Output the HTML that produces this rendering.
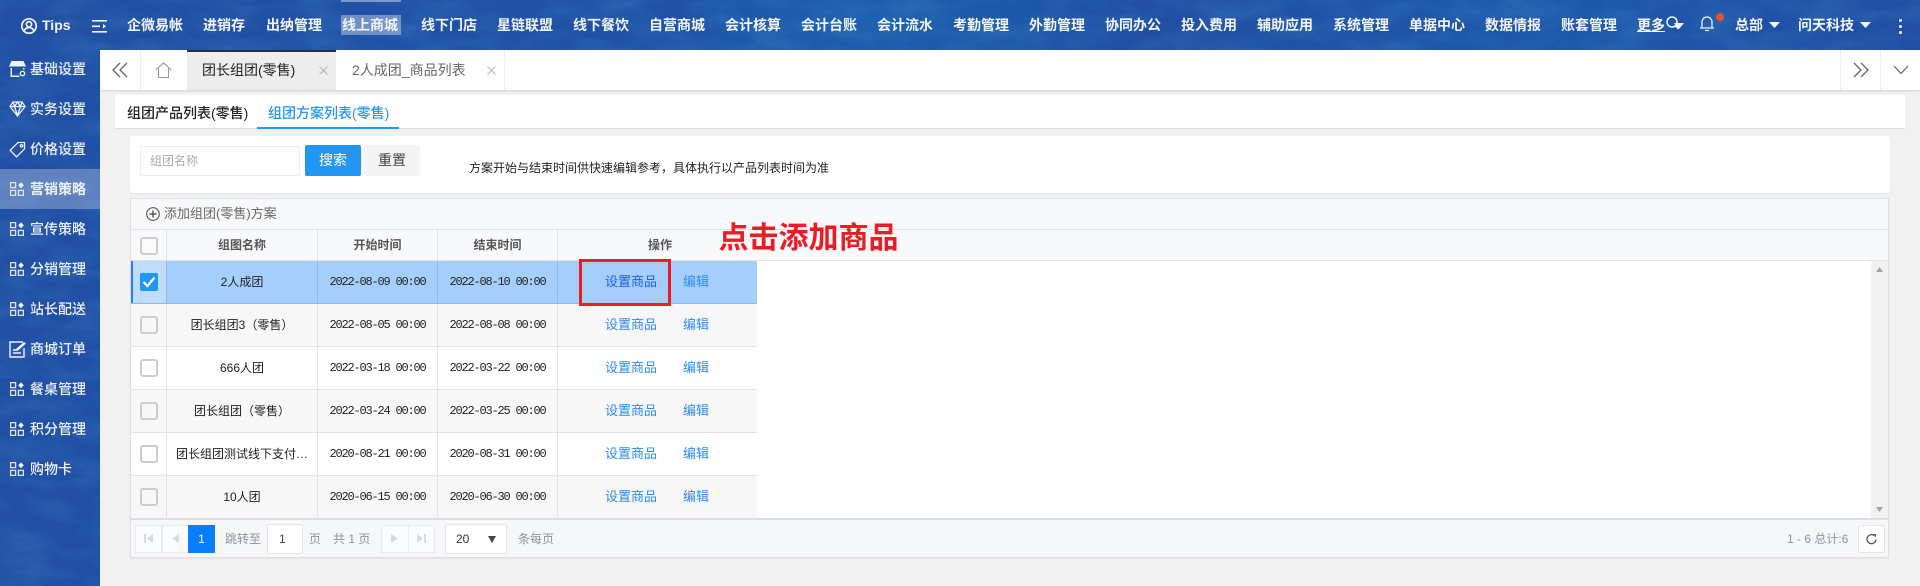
<!DOCTYPE html>
<html lang="zh">
<head>
<meta charset="utf-8">
<title>团长组团(零售)</title>
<style>
html,body{margin:0;padding:0;width:1920px;height:586px;overflow:hidden;background:#f1f1f1;}
body{position:relative;font-family:"Liberation Sans","Noto Sans CJK SC",sans-serif;font-size:12px;color:#222;}
.a{position:absolute;white-space:nowrap;}
.nav{position:absolute;top:15px;height:20px;line-height:20px;font-size:14px;font-weight:700;color:#f2f5fb;white-space:nowrap;}
.side{position:absolute;left:30px;height:20px;line-height:20px;font-size:14px;font-weight:500;color:#eef2fa;white-space:nowrap;}
.sic{position:absolute;left:10px;width:14px;height:14px;}
.hcell{position:absolute;top:0;height:30px;line-height:30px;text-align:center;font-weight:700;font-size:12px;color:#555;border-right:1px solid #e0e3e8;box-sizing:border-box;}
.row{position:absolute;left:131px;width:626px;height:43px;box-sizing:border-box;border-bottom:1px solid #e3e3e3;background:#fff;}
.row.e{background:#f7f7f7;}
.row.s{background:#a4cffc;border-bottom-color:#8fbbe8;}
.c{position:absolute;top:0;height:42px;line-height:42px;text-align:center;box-sizing:border-box;border-right:1px solid #e3e3e3;white-space:nowrap;overflow:hidden;font-size:12px;color:#222;}
.s .c{border-right-color:#8fbbe8;}
.c0{left:0;width:36px;}
.c1{left:36px;width:151px;}
.c2{left:187px;width:120px;font-family:"Liberation Mono",monospace;letter-spacing:-1.2px;color:#222;}
.c3{left:307px;width:120px;font-family:"Liberation Mono",monospace;letter-spacing:-1.2px;color:#222;}
.cb{position:absolute;left:9px;top:12px;width:18px;height:18px;box-sizing:border-box;border:2px solid #ccc;border-radius:3px;background:#fff;}
.e .cb{background:#f7f7f7;}
.lk{position:absolute;top:0;height:42px;line-height:42px;font-size:13px;color:#2e8bf5;white-space:nowrap;}
.pg{position:absolute;top:525px;height:28px;box-sizing:border-box;background:#fbfcfd;border:1px solid #e9ebee;}
.ptxt{position:absolute;top:529px;height:20px;line-height:20px;font-size:12px;color:#8d929c;white-space:nowrap;}
</style>
</head>
<body>

<!-- textured blue background -->
<svg class="a" style="left:0;top:0" width="1920" height="586" xmlns="http://www.w3.org/2000/svg">
  <defs>
    <linearGradient id="g" x1="0" y1="0" x2="1" y2="0">
      <stop offset="0" stop-color="#204fa3"/>
      <stop offset=".35" stop-color="#1f52a6"/>
      <stop offset=".45" stop-color="#1c5fad"/>
      <stop offset=".6" stop-color="#204fa3"/>
      <stop offset=".8" stop-color="#1e58aa"/>
      <stop offset="1" stop-color="#204fa3"/>
    </linearGradient>
    <filter id="n" x="0" y="0" width="100%" height="100%">
      <feTurbulence type="fractalNoise" baseFrequency=".02 .05" numOctaves="5" seed="11"/>
      <feColorMatrix type="matrix" values="0 0 0 0 .1  0 0 0 0 .38  0 0 0 0 .7  0 0 0 1.4 -.5"/>
    </filter>
  </defs>
  <rect width="1920" height="586" fill="url(#g)"/>
  <rect width="1920" height="586" filter="url(#n)" opacity=".28"/>
</svg>

<!-- main background -->
<div class="a" style="left:100px;top:50px;width:1820px;height:536px;background:#f1f1f1"></div>

<!-- header -->
<svg class="a" style="left:20px;top:17px" width="18" height="18" viewBox="0 0 18 18" fill="none" stroke="#f2f5fb" stroke-width="1.7">
  <circle cx="9" cy="9" r="7.2"/><circle cx="9" cy="7.2" r="2.6"/><path d="M4 14c1-2.6 3-3.4 5-3.4s4 .8 5 3.4"/>
</svg>
<div class="a" style="left:42px;top:15px;height:20px;line-height:20px;font-size:14px;font-weight:700;color:#f2f5fb">Tips</div>
<svg class="a" style="left:92px;top:20px" width="15" height="13" viewBox="0 0 15 13" fill="#f2f5fb">
  <rect x="0" y="0" width="15" height="1.6"/><rect x="0" y="5.5" width="8" height="1.6"/><rect x="0" y="11" width="15" height="1.6"/><path d="M11 4l3 2.3-3 2.3z"/>
</svg>
<div class="a" style="left:341px;top:0;width:60px;height:2px;background:rgba(255,255,255,.4)"></div>
<div class="a" style="left:341px;top:15px;width:60px;height:20px;background:rgba(255,255,255,.36)"></div>

<div class="nav" style="left:127px">企微易帐</div>
<div class="nav" style="left:203px">进销存</div>
<div class="nav" style="left:266px">出纳管理</div>
<div class="nav" style="left:342px">线上商城</div>
<div class="nav" style="left:421px">线下门店</div>
<div class="nav" style="left:497px">星链联盟</div>
<div class="nav" style="left:573px">线下餐饮</div>
<div class="nav" style="left:649px">自营商城</div>
<div class="nav" style="left:725px">会计核算</div>
<div class="nav" style="left:801px">会计台账</div>
<div class="nav" style="left:877px">会计流水</div>
<div class="nav" style="left:953px">考勤管理</div>
<div class="nav" style="left:1029px">外勤管理</div>
<div class="nav" style="left:1105px">协同办公</div>
<div class="nav" style="left:1181px">投入费用</div>
<div class="nav" style="left:1257px">辅助应用</div>
<div class="nav" style="left:1333px">系统管理</div>
<div class="nav" style="left:1409px">单据中心</div>
<div class="nav" style="left:1485px">数据情报</div>
<div class="nav" style="left:1561px">账套管理</div>
<div class="nav" style="left:1637px;text-decoration:underline">更多</div>

<svg class="a" style="left:1664px;top:15px" width="22" height="18" viewBox="0 0 22 18" fill="none" stroke="#f2f5fb" stroke-width="1.5">
  <circle cx="8" cy="7" r="5"/><path d="M11.500 11l3 3"/><path d="M10 8h10l-5 6z" fill="#f2f5fb" stroke="none"/>
</svg>
<svg class="a" style="left:1699px;top:15px" width="16" height="17" viewBox="0 0 16 17" fill="none" stroke="#f2f5fb" stroke-width="1.2">
  <path d="M3 12.500V7a5 5 0 0 1 10 0v5.500"/><path d="M1 13h14"/><path d="M6 15.500h4"/>
</svg>
<div class="a" style="left:1716px;top:13px;width:8px;height:8px;border-radius:50%;background:#f2501e"></div>
<div class="nav" style="left:1735px">总部</div>
<svg class="a" style="left:1769px;top:22px" width="11" height="6" viewBox="0 0 11 6"><path d="M0 0h11L5.500 6z" fill="#f2f5fb"/></svg>
<div class="nav" style="left:1798px">问天科技</div>
<svg class="a" style="left:1860px;top:22px" width="11" height="6" viewBox="0 0 11 6"><path d="M0 0h11L5.500 6z" fill="#f2f5fb"/></svg>
<div class="a" style="left:1899px;top:19px;width:3px;height:3px;background:#f2f5fb;border-radius:50%"></div>
<div class="a" style="left:1899px;top:25px;width:3px;height:3px;background:#f2f5fb;border-radius:50%"></div>
<div class="a" style="left:1899px;top:31px;width:3px;height:3px;background:#f2f5fb;border-radius:50%"></div>

<!-- sidebar -->
<div class="a" style="left:0;top:169px;width:100px;height:40px;background:rgba(255,255,255,.28)"></div>

<svg class="a" style="left:9px;top:61px" width="18" height="17" viewBox="0 0 18 17" fill="#eef2fa">
  <path d="M2.500 0h12L17 5.500H0z"/><path d="M1.500 7v9h9v-1.500H3V7zM14 7v1.500h1.500V7z"/><circle cx="13.500" cy="12.500" r="2.200" fill="none" stroke="#eef2fa" stroke-width="1.4"/>
</svg>
<div class="side" style="top:59px">基础设置</div>
<svg class="a" style="left:9px;top:101px" width="17" height="16" viewBox="0 0 17 16" fill="none" stroke="#eef2fa" stroke-width="1.3">
  <path d="M4 1h9l3 4.500L8.500 15 1 5.500z"/><path d="M1 5.500h15M5.500 5.500l3 9 3-9M4 1l1.500 4.500L8.500 1l3 4.500L13 1"/>
</svg>
<div class="side" style="top:99px">实务设置</div>
<svg class="a" style="left:9px;top:141px" width="17" height="17" viewBox="0 0 17 17" fill="none" stroke="#eef2fa" stroke-width="1.3">
  <path d="M9 1.500h6.500V8L7.500 15.800 1.200 9.300z"/><circle cx="12.500" cy="4.800" r="1.200"/>
</svg>
<div class="side" style="top:139px">价格设置</div>

<svg width="0" height="0" style="position:absolute">
  <symbol id="gr" viewBox="0 0 14 14">
    <g fill="none" stroke="#dfe6f5" stroke-width="1.300">
      <rect x=".6" y=".6" width="5" height="5"/><rect x=".6" y="8.400" width="5" height="5"/><rect x="8.400" y="8.400" width="5" height="5"/>
    </g>
    <path d="M11 .2l2.800 3-2.800 3-2.800-3z" fill="#eef2fa"/>
  </symbol>
</svg>

<svg class="sic" style="top:182px"><use href="#gr"/></svg>
<div class="side" style="top:179px;font-weight:700">营销策略</div>
<svg class="sic" style="top:222px"><use href="#gr"/></svg>
<div class="side" style="top:219px">宣传策略</div>
<svg class="sic" style="top:262px"><use href="#gr"/></svg>
<div class="side" style="top:259px">分销管理</div>
<svg class="sic" style="top:302px"><use href="#gr"/></svg>
<div class="side" style="top:299px">站长配送</div>
<svg class="a" style="left:9px;top:341px" width="18" height="17" viewBox="0 0 18 17" fill="none" stroke="#eef2fa" stroke-width="1.400">
  <path d="M14 1H1v15h14V7"/><path d="M4 12h8M4 9h5"/><path d="M7 8l8-7 2 1.500-8 7z" fill="#eef2fa" stroke="none"/>
</svg>
<div class="side" style="top:339px">商城订单</div>
<svg class="sic" style="top:382px"><use href="#gr"/></svg>
<div class="side" style="top:379px">餐桌管理</div>
<svg class="sic" style="top:422px"><use href="#gr"/></svg>
<div class="side" style="top:419px">积分管理</div>
<svg class="sic" style="top:462px"><use href="#gr"/></svg>
<div class="side" style="top:459px">购物卡</div>

<!-- tab bar -->
<div class="a" style="left:100px;top:50px;width:1820px;height:40px;background:#fff;box-shadow:0 1px 2px rgba(0,0,0,.14)"></div>
<div class="a" style="left:140px;top:50px;width:1px;height:40px;background:#eee"></div>
<svg class="a" style="left:112px;top:62px" width="16" height="16" viewBox="0 0 16 16" fill="none" stroke="#666" stroke-width="1.300"><path d="M8 1L1 8l7 7M15 1L8 8l7 7"/></svg>
<svg class="a" style="left:155px;top:62px" width="17" height="16" viewBox="0 0 17 16" fill="none" stroke="#999" stroke-width="1.100"><path d="M.8 8L8.500.8 16.200 8"/><path d="M3.500 6.500v9h10v-9"/></svg>
<div class="a" style="left:187px;top:50px;width:149px;height:40px;background:#ededed"></div>
<div class="a" style="left:187px;top:50px;width:149px;height:2px;background:#30303c"></div>
<div class="a" style="left:202px;top:60px;height:20px;line-height:20px;font-size:14px;color:#222">团长组团(零售)</div>
<svg class="a" style="left:319px;top:66px" width="9" height="9" viewBox="0 0 9 9" stroke="#b5b5b5" stroke-width="1"><path d="M.5.500l8 8M8.500.500l-8 8"/></svg>
<div class="a" style="left:352px;top:60px;height:20px;line-height:20px;font-size:14px;color:#666">2人成团_商品列表</div>
<svg class="a" style="left:487px;top:66px" width="9" height="9" viewBox="0 0 9 9" stroke="#b5b5b5" stroke-width="1"><path d="M.5.500l8 8M8.500.500l-8 8"/></svg>
<div class="a" style="left:504px;top:50px;width:1px;height:40px;background:#eee"></div>
<div class="a" style="left:1840px;top:50px;width:1px;height:40px;background:#eee"></div>
<div class="a" style="left:1880px;top:50px;width:1px;height:40px;background:#eee"></div>
<svg class="a" style="left:1853px;top:62px" width="16" height="16" viewBox="0 0 16 16" fill="none" stroke="#666" stroke-width="1.300"><path d="M1 1l7 7-7 7M8 1l7 7-7 7"/></svg>
<svg class="a" style="left:1893px;top:65px" width="16" height="10" viewBox="0 0 16 10" fill="none" stroke="#666" stroke-width="1.200"><path d="M1 1l7 7.500L15 1"/></svg>

<!-- sub tabs -->
<div class="a" style="left:115px;top:95px;width:1790px;height:34px;background:#fff;border-bottom:1px solid #ddd;box-sizing:border-box"></div>
<div class="a" style="left:127px;top:103px;height:20px;line-height:20px;font-size:14px;font-weight:500;color:#222">组团产品列表(零售)</div>
<div class="a" style="left:268px;top:103px;height:20px;line-height:20px;font-size:14px;font-weight:500;color:#2196f3">组团方案列表(零售)</div>
<div class="a" style="left:257px;top:127px;width:142px;height:2px;background:#2196f3"></div>

<!-- search card -->
<div class="a" style="left:130px;top:136px;width:1760px;height:57px;background:#fff;border-radius:3px;box-shadow:0 1px 1px rgba(0,0,0,.05)"></div>
<div class="a" style="left:140px;top:146px;width:160px;height:30px;border:1px solid #eee;box-sizing:border-box;border-radius:2px"></div>
<div class="a" style="left:150px;top:151px;height:20px;line-height:20px;font-size:12px;color:#aaa">组团名称</div>
<div class="a" style="left:305px;top:145px;width:56px;height:31px;line-height:30px;text-align:center;background:#2196f3;color:#fff;font-size:14px;border-radius:2px">搜索</div>
<div class="a" style="left:364px;top:145px;width:56px;height:31px;line-height:30px;text-align:center;background:#f4f4f4;color:#444;font-size:14px;border-radius:2px">重置</div>
<div class="a" style="left:469px;top:158px;height:20px;line-height:20px;font-size:12px;color:#222">方案开始与结束时间供快速编辑参考，具体执行以产品列表时间为准</div>

<!-- table card -->
<div class="a" style="left:130px;top:198px;width:1759px;height:360px;background:#fff;border:1px solid #dfdfdf;box-sizing:border-box;box-shadow:0 1px 1px rgba(0,0,0,.05)"></div>
<div class="a" style="left:131px;top:199px;width:1757px;height:31px;background:#f8f9fb;border-bottom:1px solid #e0e3e8;box-sizing:border-box"></div>
<svg class="a" style="left:146px;top:207px" width="14" height="14" viewBox="0 0 14 14" fill="none" stroke="#555" stroke-width="1.100"><circle cx="7" cy="7" r="6.300"/><path d="M7 3.500v7M3.500 7h7" stroke-width="1.500"/></svg>
<div class="a" style="left:164px;top:204px;height:20px;line-height:20px;font-size:13px;color:#666">添加组团(零售)方案</div>

<!-- table header -->
<div class="a" style="left:131px;top:230px;width:1757px;height:31px;background:#f8f9fb;border-bottom:1px solid #e0e3e8;box-sizing:border-box">
  <div class="hcell" style="left:0;width:36px"></div>
  <div class="hcell" style="left:36px;width:151px">组图名称</div>
  <div class="hcell" style="left:187px;width:120px">开始时间</div>
  <div class="hcell" style="left:307px;width:120px">结束时间</div>
  <div class="hcell" style="left:427px;width:204px;border-right:none">操作</div>
</div>
<div class="a" style="left:140px;top:237px;width:18px;height:18px;box-sizing:border-box;border:2px solid #ccc;border-radius:3px;background:#fafafa"></div>

<!-- rows -->
<div class="row s" style="top:261px">
  <div class="c c0" style="background:#c0dcfc"></div>
  <div class="c c1">2人成团</div>
  <div class="c c2">2022-08-09 00:00</div>
  <div class="c c3">2022-08-10 00:00</div>
  <div class="a" style="left:0;top:0;width:2px;height:42px;background:#2a7fe8"></div>
  <div class="a" style="left:9px;top:12px;width:18px;height:18px;border-radius:2px;background:#2196f3"></div>
  <svg class="a" style="left:11px;top:15px" width="14" height="12" viewBox="0 0 14 12" fill="none" stroke="#fff" stroke-width="2.200"><path d="M1.500 6l4 4 7-8.500"/></svg>
  <div class="lk" style="left:474px;color:#1d5ee8">设置商品</div>
  <div class="lk" style="left:552px">编辑</div>
</div>
<div class="row e" style="top:304px">
  <div class="c c0"><div class="cb"></div></div>
  <div class="c c1">团长组团3（零售）</div>
  <div class="c c2">2022-08-05 00:00</div>
  <div class="c c3">2022-08-08 00:00</div>
  <div class="lk" style="left:474px">设置商品</div>
  <div class="lk" style="left:552px">编辑</div>
</div>
<div class="row" style="top:347px">
  <div class="c c0"><div class="cb"></div></div>
  <div class="c c1">666人团</div>
  <div class="c c2">2022-03-18 00:00</div>
  <div class="c c3">2022-03-22 00:00</div>
  <div class="lk" style="left:474px">设置商品</div>
  <div class="lk" style="left:552px">编辑</div>
</div>
<div class="row e" style="top:390px">
  <div class="c c0"><div class="cb"></div></div>
  <div class="c c1">团长组团（零售）</div>
  <div class="c c2">2022-03-24 00:00</div>
  <div class="c c3">2022-03-25 00:00</div>
  <div class="lk" style="left:474px">设置商品</div>
  <div class="lk" style="left:552px">编辑</div>
</div>
<div class="row" style="top:433px">
  <div class="c c0"><div class="cb"></div></div>
  <div class="c c1">团长组团测试线下支付…</div>
  <div class="c c2">2020-08-21 00:00</div>
  <div class="c c3">2020-08-31 00:00</div>
  <div class="lk" style="left:474px">设置商品</div>
  <div class="lk" style="left:552px">编辑</div>
</div>
<div class="row e" style="top:476px">
  <div class="c c0"><div class="cb"></div></div>
  <div class="c c1">10人团</div>
  <div class="c c2">2020-06-15 00:00</div>
  <div class="c c3">2020-06-30 00:00</div>
  <div class="lk" style="left:474px">设置商品</div>
  <div class="lk" style="left:552px">编辑</div>
</div>

<!-- scrollbar -->
<div class="a" style="left:1871px;top:261px;width:17px;height:258px;background:#f1f1f1"></div>
<svg class="a" style="left:1876px;top:267px" width="7" height="5" viewBox="0 0 7 5"><path d="M3.500 0L7 5H0z" fill="#a3a3a3"/></svg>
<svg class="a" style="left:1876px;top:507px" width="7" height="5" viewBox="0 0 7 5"><path d="M0 0h7L3.500 5z" fill="#a3a3a3"/></svg>

<!-- pagination -->
<div class="a" style="left:131px;top:518px;width:1757px;height:39px;background:#f6f7f9;border-top:2px solid #dedede;box-sizing:border-box"></div>
<div class="pg" style="left:135px;width:27px"></div>
<div class="pg" style="left:162px;width:27px"></div>
<svg class="a" style="left:144px;top:534px" width="9" height="9" viewBox="0 0 9 9" fill="#d6d9de"><rect x="0" y="0" width="2" height="9"/><path d="M9 0v9L3 4.500z"/></svg>
<svg class="a" style="left:172px;top:534px" width="7" height="9" viewBox="0 0 7 9" fill="#d6d9de"><path d="M7 0v9L0 4.500z"/></svg>
<div class="a" style="left:188px;top:525px;width:27px;height:28px;line-height:28px;text-align:center;background:#0a7efa;color:#fff;font-size:12px">1</div>
<div class="ptxt" style="left:225px">跳转至</div>
<div class="a" style="left:267px;top:524px;width:36px;height:30px;box-sizing:border-box;background:#fff;border:1px solid #e4e6ea;border-radius:2px;line-height:28px;padding-left:11px;font-size:12px;color:#444">1</div>
<div class="ptxt" style="left:309px">页</div>
<div class="ptxt" style="left:333px">共 1 页</div>
<div class="pg" style="left:381px;width:28px"></div>
<div class="pg" style="left:408px;width:27px"></div>
<svg class="a" style="left:391px;top:534px" width="7" height="9" viewBox="0 0 7 9" fill="#d6d9de"><path d="M0 0v9l7-4.500z"/></svg>
<svg class="a" style="left:417px;top:534px" width="9" height="9" viewBox="0 0 9 9" fill="#d6d9de"><path d="M0 0v9l6-4.500z"/><rect x="7" y="0" width="2" height="9"/></svg>
<div class="a" style="left:445px;top:524px;width:62px;height:30px;box-sizing:border-box;background:#fff;border:1px solid #e4e6ea;border-radius:2px;line-height:28px;padding-left:10px;font-size:12px;color:#333">20</div>
<svg class="a" style="left:488px;top:536px" width="8" height="7" viewBox="0 0 8 7"><path d="M0 0h8L4 7z" fill="#444"/></svg>
<div class="ptxt" style="left:518px">条每页</div>
<div class="ptxt" style="left:1787px;color:#8a93a8">1 - 6 总计:6</div>
<div class="a" style="left:1858px;top:525px;width:27px;height:28px;box-sizing:border-box;background:#fff;border:1px solid #e4e6ea;border-radius:2px"></div>
<svg class="a" style="left:1866px;top:534px" width="11" height="11" viewBox="0 0 11 11" fill="none" stroke="#555" stroke-width="1.300"><path d="M8.500 1.800A4.500 4.500 0 1 0 10 5.500"/><path d="M7 .2l2.600.5-.5 2.600" stroke-width="1"/></svg>

<!-- annotation -->
<div class="a" style="left:579px;top:259px;width:92px;height:47px;box-sizing:border-box;border:3px solid #ed1c24"></div>
<div class="a" style="left:718.500px;top:219px;height:40px;line-height:40px;font-size:30px;font-weight:700;color:#ed1c24">点击添加商品</div>

</body>
</html>
